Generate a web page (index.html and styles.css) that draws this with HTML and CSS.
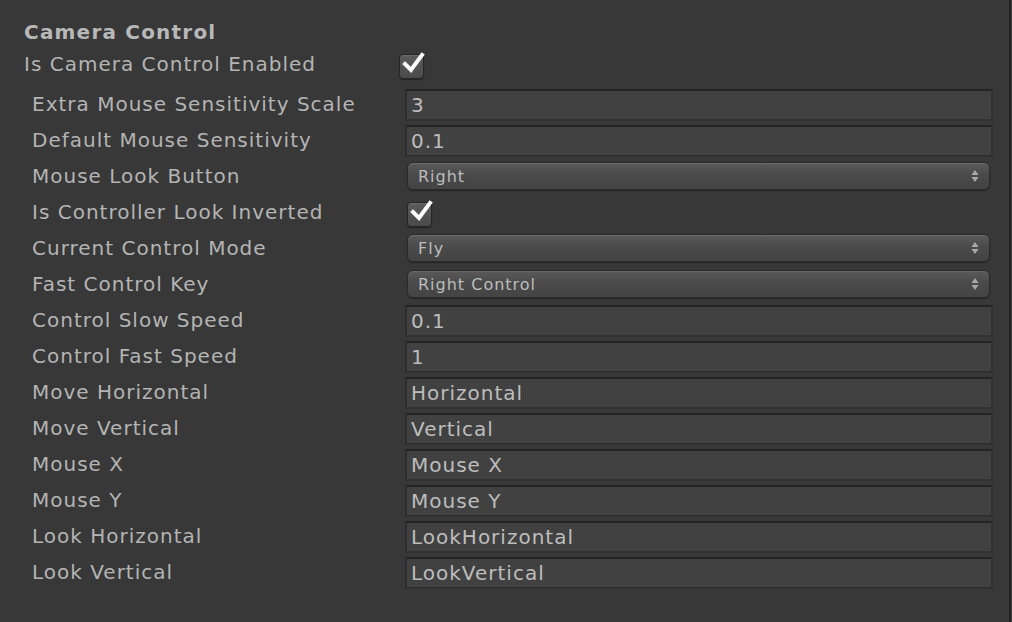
FILE: index.html
```html
<!DOCTYPE html>
<html>
<head>
<meta charset="utf-8">
<link rel="stylesheet" href="styles.css">
</head>
<body>
<div class="frame">
  <div class="panel">
    <div class="header">Camera Control</div>
    <div class="row top">
      <div class="label">Is Camera Control Enabled</div>
      <div class="checkbox"><svg viewBox="0 0 24 24" class="tick"><path d="M4 13 L10 19 L21 4" /></svg></div>
    </div>
    <div class="group">
      <div class="row"><div class="label">Extra Mouse Sensitivity Scale</div><div class="field">3</div></div>
      <div class="row"><div class="label">Default Mouse Sensitivity</div><div class="field">0.1</div></div>
      <div class="row"><div class="label">Mouse Look Button</div><div class="dropdown"><span>Right</span><svg class="arrows" viewBox="0 0 8 14"><path d="M4 1 L7.5 6 L0.5 6 Z"/><path d="M4 13 L7.5 8 L0.5 8 Z"/></svg></div></div>
      <div class="row"><div class="label">Is Controller Look Inverted</div><div class="checkbox inset"><svg viewBox="0 0 24 24" class="tick"><path d="M4 13 L10 19 L21 4" /></svg></div></div>
      <div class="row"><div class="label">Current Control Mode</div><div class="dropdown"><span>Fly</span><svg class="arrows" viewBox="0 0 8 14"><path d="M4 1 L7.5 6 L0.5 6 Z"/><path d="M4 13 L7.5 8 L0.5 8 Z"/></svg></div></div>
      <div class="row"><div class="label">Fast Control Key</div><div class="dropdown"><span>Right Control</span><svg class="arrows" viewBox="0 0 8 14"><path d="M4 1 L7.5 6 L0.5 6 Z"/><path d="M4 13 L7.5 8 L0.5 8 Z"/></svg></div></div>
      <div class="row"><div class="label">Control Slow Speed</div><div class="field">0.1</div></div>
      <div class="row"><div class="label">Control Fast Speed</div><div class="field">1</div></div>
      <div class="row"><div class="label">Move Horizontal</div><div class="field">Horizontal</div></div>
      <div class="row"><div class="label">Move Vertical</div><div class="field">Vertical</div></div>
      <div class="row"><div class="label">Mouse X</div><div class="field">Mouse X</div></div>
      <div class="row"><div class="label">Mouse Y</div><div class="field">Mouse Y</div></div>
      <div class="row"><div class="label">Look Horizontal</div><div class="field">LookHorizontal</div></div>
      <div class="row"><div class="label">Look Vertical</div><div class="field">LookVertical</div></div>
    </div>
  </div>
</div>
</body>
</html>
```

FILE: styles.css
```css
html, body {
  margin: 0;
  padding: 0;
  background: #383838;
}
.frame {
  width: 1012px;
  height: 622px;
  display: flex;
  background: #3c3c3c;
  overflow: hidden;
}
.panel {
  width: 1011px;
  flex: none;
  box-sizing: border-box;
  border-right: 2px solid #232323;
  background: #383838;
  padding: 16px 0 0 24px;
  font-family: "DejaVu Sans", Verdana, sans-serif;
  font-size: 20px;
  letter-spacing: 1px;
  color: #b4b4b4;
}
.header {
  height: 32px;
  line-height: 32px;
  font-weight: bold;
  letter-spacing: 1.2px;
  color: #b8b8b8;
}
.row {
  display: flex;
  align-items: center;
  height: 36px;
}
.row.top {
  height: 32px;
  margin-bottom: 6px;
}
.label {
  width: 373px;
  flex: none;
  white-space: nowrap;
}
.row.top .label {
  width: 375px;
}
.group {
  padding-left: 8px;
}
.field {
  width: 588px;
  height: 32px;
  box-sizing: border-box;
  margin-top: 2px;
  background: #414141;
  border-top: 2px solid #242424;
  border-left: 2px solid #2c2c2c;
  border-right: 2px solid #313131;
  border-bottom: 2px solid #313131;
  padding-left: 4px;
  line-height: 28px;
  color: #bdbdbd;
  white-space: nowrap;
}
.dropdown {
  margin-left: 2px;
  width: 583px;
  height: 28px;
  box-sizing: border-box;
  border-radius: 6px;
  border: 1px solid #2a2a2a;
  background: linear-gradient(#5a5a5a, #4a4a4a 45%, #444444);
  box-shadow: inset 0 1px 0 #6a6a6a, 0 1px 1px #262626;
  display: flex;
  align-items: center;
  justify-content: space-between;
  padding: 0 10px 0 10px;
  font-size: 16px;
  color: #bcbcbc;
}
.arrows {
  width: 8px;
  height: 14px;
  fill: #a8a8a8;
}
.checkbox {
  width: 25px;
  height: 25px;
  box-sizing: border-box;
  border-radius: 4px;
  border: 1px solid #262626;
  background: linear-gradient(#5c5c5c, #4a4a4a);
  box-shadow: inset 0 1px 0 #6c6c6c, 0 1px 1px #222;
  position: relative;
  margin-top: 4px;
}
.checkbox.inset {
  margin-left: 2px;
}
.tick {
  position: absolute;
  left: 1px;
  top: -4px;
  width: 24px;
  height: 24px;
  fill: none;
  stroke: #ffffff;
  stroke-width: 4;
  stroke-linecap: square;
  stroke-linejoin: miter;
}
```
